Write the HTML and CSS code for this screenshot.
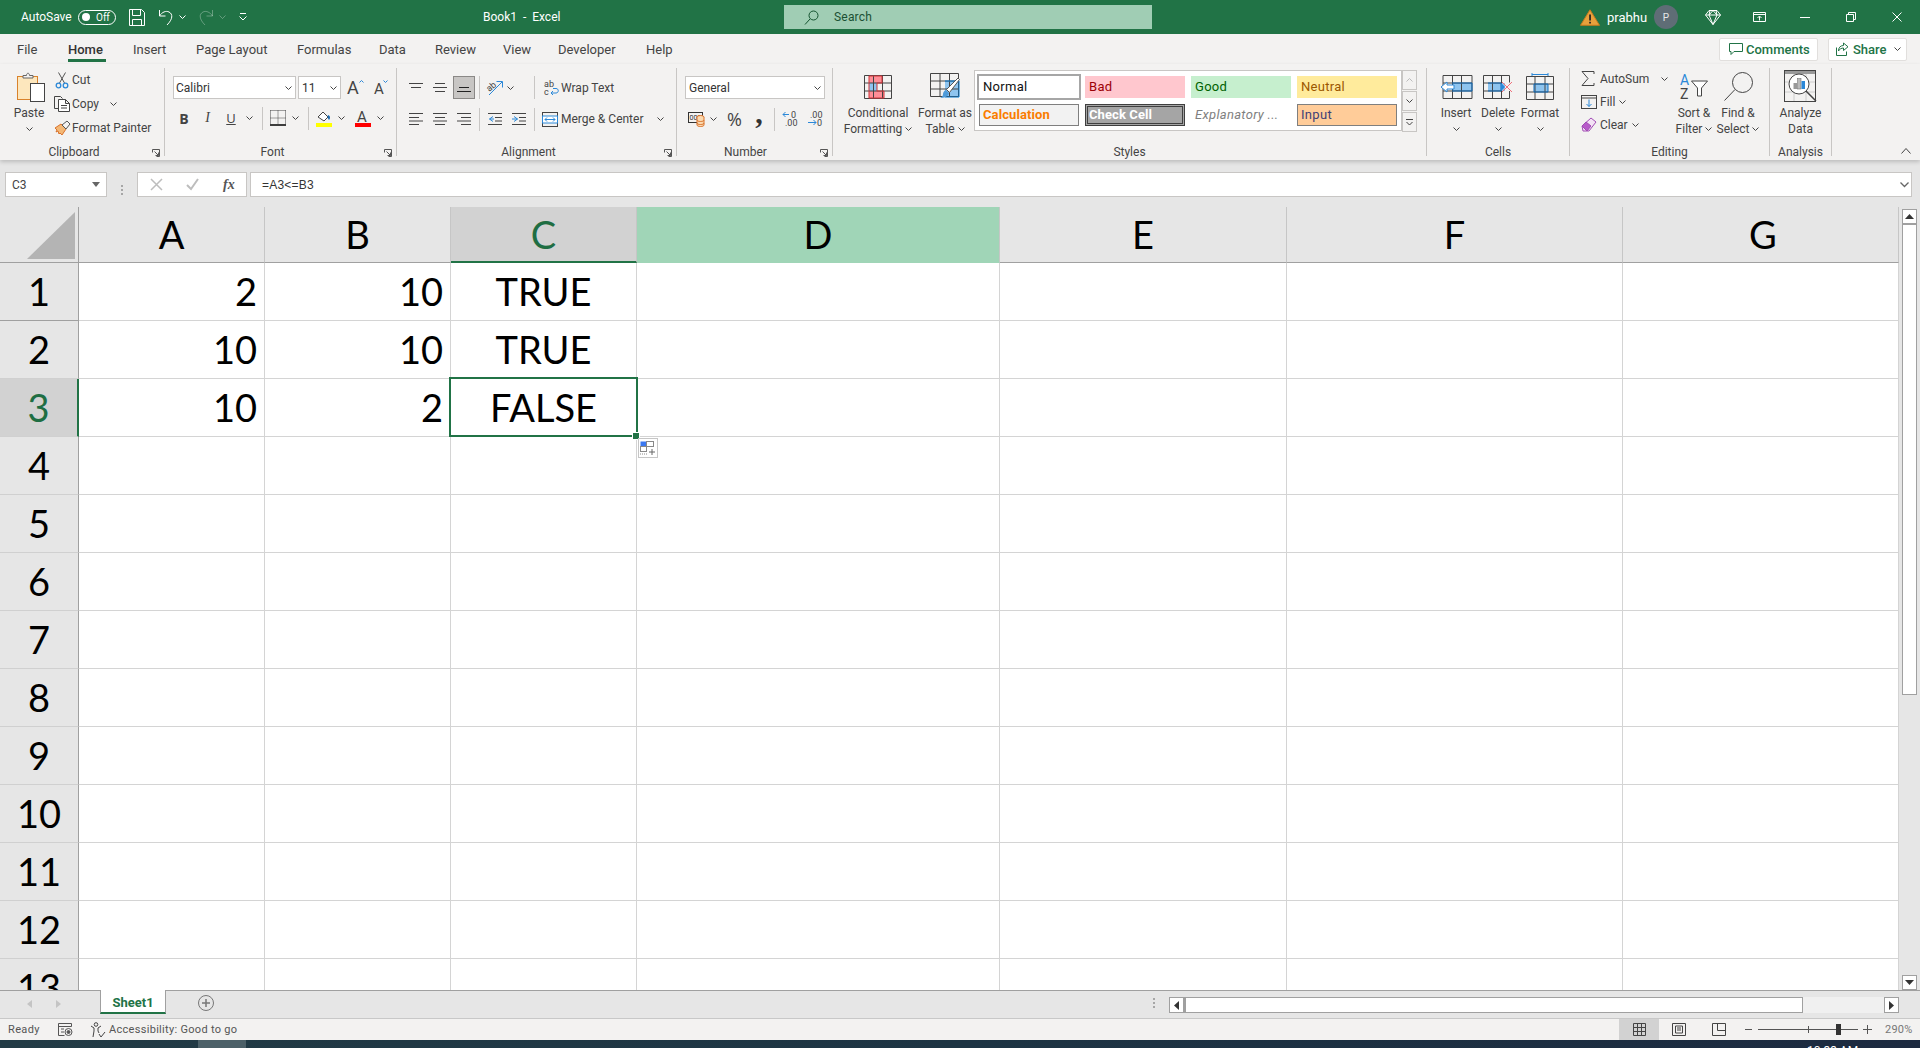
FILE: index.html
```html
<!DOCTYPE html>
<html lang="en">
<head>
<meta charset="utf-8">
<title>Book1 - Excel</title>
<link rel="stylesheet" href="styles.css">
</head>
<body>
<svg class="sprite" width="0" height="0" aria-hidden="true">
  <symbol id="chev" viewBox="0 0 7 4"><path d="M.5.5l3 3 3-3" fill="none" stroke="#444" stroke-width="1"/></symbol>
  <symbol id="launch" viewBox="0 0 8 8"><path d="M.5 3.500v-3h7v7h-3M2.500 2.500l4 4M6.500 3.500v3h-3" fill="none" stroke="#555" stroke-width="1"/></symbol>
</svg>

<header class="titlebar">
  <div class="qat">
    <span class="autosave">AutoSave</span>
    <span class="toggle ml7"><i class="knob"></i><b>Off</b></span>
    <svg class="ml13" width="16" height="17" viewBox="0 0 16 17" fill="none" stroke="#fff"><path d="M.5.500h12l3 3v13H.5zM3.500.5v6h8v-6M3.500 16.500v-6h9v6"/></svg>
    <svg class="ml13" width="16" height="17" viewBox="0 0 16 17" fill="none" stroke="#fff"><path d="M1.500 1v6h6M1.500 7C4 3 8 1.500 11 3c4 2 4 7-2 13"/></svg>
    <svg class="ml5" width="7" height="4"><path d="M.5.5l3 3 3-3" fill="none" stroke="#fff"/></svg>
    <svg class="ml12 dim" width="16" height="17" viewBox="0 0 16 17" fill="none" stroke="#fff"><path d="M14.500 1v6h-6M14.500 7C12 3 8 1.500 5 3c-4 2-4 7 2 13"/></svg>
    <svg class="ml5 dim" width="7" height="4"><path d="M.5.5l3 3 3-3" fill="none" stroke="#fff"/></svg>
    <svg class="ml12" width="10" height="8" viewBox="0 0 10 8" fill="none" stroke="#fff"><path d="M2 .5h6M1.500 3.500L5 7l3.500-3.500"/></svg>
  </div>
  <div class="doc">Book1&nbsp; -&nbsp; Excel</div>
  <div class="search">
    <svg width="15" height="15" viewBox="0 0 15 15" fill="none" stroke="#14532f" stroke-width="1"><circle cx="9.500" cy="5.500" r="4.500"/><path d="M6 9l-5 5.500"/></svg>
    <span>Search</span>
  </div>
  <div class="tb-spacer"></div>
  <div class="winctl">
    <svg width="20" height="17" viewBox="0 0 20 17"><path d="M10 .8L19.500 16.300H.5z" fill="#e8a13c" stroke="#c77a1c"/><rect x="9.200" y="5.500" width="1.700" height="6" fill="#222"/><rect x="9.200" y="12.800" width="1.700" height="1.700" fill="#222"/></svg>
    <span class="uname">prabhu</span>
    <span class="avatarcell"><span class="avatar">P</span></span>
    <svg width="16" height="15" viewBox="0 0 16 15" fill="none" stroke="#fff"><path d="M4 .5h8l3.500 4.500L8 14.500.5 5zM.5 5h15M5 .5l-1 4.500 4 9.500 4-9.500-1-4.500M4 5l4-4.500L12 5"/></svg>
    <svg width="13" height="10" viewBox="0 0 13 10" fill="none" stroke="#fff"><path d="M.5.500h12v9H.5zM.5 2.500h12M6.500 8.500v-4M4.500 6l2-2 2 2"/></svg>
    <svg width="10" height="1" viewBox="0 0 10 1"><rect width="10" height="1" fill="#fff"/></svg>
    <svg width="10" height="10" viewBox="0 0 10 10" fill="none" stroke="#fff"><path d="M.5 2.500h7v7h-7zM2.500 2.500v-2h7v7h-2"/></svg>
    <svg width="10" height="10" viewBox="0 0 10 10" fill="none" stroke="#fff"><path d="M.5.500l9 9M9.500.500l-9 9"/></svg>
  </div>
</header>

<nav class="tabs">
  <span class="tab">File</span>
  <span class="tab tab-active"><b>Home</b></span>
  <span class="tab">Insert</span>
  <span class="tab">Page Layout</span>
  <span class="tab">Formulas</span>
  <span class="tab">Data</span>
  <span class="tab">Review</span>
  <span class="tab">View</span>
  <span class="tab">Developer</span>
  <span class="tab">Help</span>
  <span class="tabs-fill"></span>
  <span class="cmdbtn comments">
    <svg width="16" height="14" viewBox="0 0 16 14" fill="none" stroke="#217346"><path d="M1.500 1.500h13v8H6l-3 3v-3H1.500z"/></svg>
    <span>Comments</span>
  </span>
  <span class="cmdbtn share">
    <svg width="14" height="14" viewBox="0 0 14 14" fill="none" stroke="#217346"><path d="M1.500 5.500v8h10v-4M8.500 1v2.500C5 3.500 3.500 6 3.500 9c1-2 3-3 5-3v2.500L13 4.800z"/></svg>
    <span>Share</span>
    <svg class="share-chev" width="7" height="4"><use href="#chev"/></svg>
  </span>
</nav>

<section class="ribbon">
  <!-- Clipboard -->
  <div class="group g-clip">
    <div class="body clip">
      <div class="big paste">
        <div class="bigicon">
          <svg width="28" height="31" viewBox="0 0 28 31"><rect x=".5" y="5.500" width="20" height="23" fill="#fde7bd" stroke="#d9822b"/><path d="M3 8.500h15" stroke="#fde7bd"/><path d="M6 7V4.500h3.500c0-3 3-3 3 0H16V7z" fill="#f3f2f1" stroke="#666"/><rect x="13.500" y="12.500" width="14" height="18" fill="#fff" stroke="#444"/></svg>
        </div>
        <span>Paste</span>
        <svg class="chev-line" width="7" height="4"><use href="#chev"/></svg>
      </div>
      <div class="cliplist">
        <div class="clipitem">
          <span class="cico"><svg width="15" height="17" viewBox="0 0 15 17" fill="none"><path d="M3.500.5L9.500 11M10.500.5L4.500 11" stroke="#555"/><circle cx="3.500" cy="13.500" r="2.300" stroke="#2b88d8" stroke-width="1.300"/><circle cx="10.500" cy="13.500" r="2.300" stroke="#2b88d8" stroke-width="1.300"/></svg></span>
          <span>Cut</span>
        </div>
        <div class="clipitem">
          <span class="cico"><svg width="16" height="16" viewBox="0 0 16 16" fill="none" stroke="#444"><path d="M4.500 12.500H.5V.5h6l2 2"/><path d="M4.500 3.500h7l4 4v8h-11zM11.500 3.500v4h4M7 9.500h6M7 12h6" fill="#fff"/></svg></span>
          <span>Copy</span>
          <svg class="copy-chev" width="7" height="4"><use href="#chev"/></svg>
        </div>
        <div class="clipitem">
          <span class="cico"><svg width="17" height="16" viewBox="0 0 17 16"><path d="M1 8l6-4 5 5-4 6-2-2-1 1-1-3-2 1 1-2z" fill="#f3b775" stroke="#d9722b"/><path d="M8 5l5-4 3 3-4 5z" fill="#f3f2f1" stroke="#555"/></svg></span>
          <span>Format Painter</span>
        </div>
      </div>
    </div>
    <div class="glabel shift">Clipboard<svg class="launch" width="8" height="8"><use href="#launch"/></svg></div>
  </div>

  <!-- Font -->
  <div class="group g-font">
    <div class="body">
      <div class="font-row1">
        <span class="combo c-font"><span>Calibri</span><svg width="7" height="4"><use href="#chev"/></svg></span>
        <span class="combo c-size"><span>11</span><svg width="7" height="4"><use href="#chev"/></svg></span>
        <svg class="ml6" width="17" height="16" viewBox="0 0 17 16"><text x="0" y="15" class="svgA" font-size="18" fill="#444">A</text><path d="M12.500 3.500L14.500 1.500l2 2" fill="none" stroke="#2b88d8"/></svg>
        <svg class="ml10" width="14" height="16" viewBox="0 0 14 16"><text x="0" y="15" class="svgA" font-size="15" fill="#444">A</text><path d="M9.500 1.500l2 2 2-2" fill="none" stroke="#2b88d8"/></svg>
      </div>
      <div class="font-row2">
        <span class="fmt fmt-b">B</span>
        <span class="fmt fmt-i">I</span>
        <span class="fmt fmt-u">U</span>
        <svg width="7" height="4"><use href="#chev"/></svg>
        <i class="vsep"></i>
        <svg width="16" height="16" viewBox="0 0 16 16" fill="none" stroke="#444"><path d="M.5.500h15M.5 8h15M8 .5v14M.5.500v14M15.500.500v14" stroke-dasharray="1 1"/><path d="M0 15h16" stroke-width="1.500" stroke="#000"/></svg>
        <svg width="7" height="4"><use href="#chev"/></svg>
        <i class="vsep"></i>
        <svg width="16" height="17" viewBox="0 0 16 17"><path d="M2 7l5-5 5 5-4 4z" fill="#fff" stroke="#444"/><path d="M12 5c3 1 2 4 1 5-1-1-2-3-1-5z" fill="#1f6cb0"/><rect y="13" width="16" height="4" fill="#ff0"/></svg>
        <svg width="7" height="4"><use href="#chev"/></svg>
        <svg class="cell-end" width="16" height="17" viewBox="0 0 16 17"><text x="2" y="12" class="svgA" font-size="15" fill="#444">A</text><rect y="13" width="16" height="4" fill="#f00"/></svg>
        <svg width="7" height="4"><use href="#chev"/></svg>
      </div>
    </div>
    <div class="glabel shift">Font<svg class="launch" width="8" height="8"><use href="#launch"/></svg></div>
  </div>

  <!-- Alignment -->
  <div class="group g-align">
    <div class="body align-grid">
      <svg width="14" height="9" viewBox="0 0 14 9" stroke="#444"><path d="M0 .5h14M2 4.500h10"/></svg>
      <svg width="14" height="9" viewBox="0 0 14 9" stroke="#444"><path d="M2 .5h10M0 4.500h14M2 8.500h10"/></svg>
      <span class="al-sel"><svg width="14" height="9" viewBox="0 0 14 9" stroke="#222"><path d="M2 4.500h10M0 8.500h14"/></svg></span>
      <i class="vsep"></i>
      <svg width="17" height="17" viewBox="0 0 17 17"><text x="0" y="11" transform="rotate(-40 4 9)" class="svgA" font-size="9" fill="#444">ab</text><path d="M2 16L15 3M9.500 2.500H15.500V8.500" fill="none" stroke="#2b88d8"/></svg>
      <svg class="left-cell" width="7" height="4"><use href="#chev"/></svg>
      <i class="vsep"></i>
      <span class="al-text">
        <span class="al-ico1"><svg width="15" height="16" viewBox="0 0 15 16"><text x="0" y="7" class="svgA" font-size="9" fill="#444">ab</text><text x="0" y="15" class="svgA" font-size="9" fill="#444">c</text><path d="M9 8.500h3c3 0 3 4.500 0 4.500H7M9 11l-2 2 2 2" fill="none" stroke="#2b88d8"/></svg></span>
        <span>Wrap Text</span>
      </span>

      <svg width="14" height="12" viewBox="0 0 14 12" stroke="#444"><path d="M0 .5h14M0 4.500h10M0 8h14M0 11.500h10"/></svg>
      <svg width="14" height="12" viewBox="0 0 14 12" stroke="#444"><path d="M0 .5h14M2 4.500h10M0 8h14M2 11.500h10"/></svg>
      <svg width="14" height="12" viewBox="0 0 14 12" stroke="#444"><path d="M0 .5h14M4 4.500h10M0 8h14M4 11.500h10"/></svg>
      <i class="vsep"></i>
      <svg width="14" height="12" viewBox="0 0 14 12" fill="none"><path d="M0 .5h14M7 4.500h7M7 8h7M0 11.500h14" stroke="#444"/><path d="M5 3.500L1.500 6 5 8.500M1.500 6H6" stroke="#2b88d8"/></svg>
      <svg width="14" height="12" viewBox="0 0 14 12" fill="none"><path d="M0 .5h14M7 4.500h7M7 8h7M0 11.500h14" stroke="#444"/><path d="M2 3.500L5.500 6 2 8.500M5.500 6H0" stroke="#2b88d8"/></svg>
      <i class="vsep"></i>
      <span class="al-text">
        <span class="al-ico2"><svg width="16" height="15" viewBox="0 0 16 15" fill="none"><rect x=".5" y=".5" width="15" height="14" stroke="#444"/><rect x=".5" y="4" width="15" height="7" fill="#fff" stroke="#2b88d8"/><path d="M3 7.500h10M5 5.500l-2 2 2 2M11 5.500l2 2-2 2" stroke="#2b88d8"/></svg></span>
        <span>Merge &amp; Center</span>
        <svg class="merge-chev" width="7" height="4"><use href="#chev"/></svg>
      </span>
    </div>
    <div class="glabel shift">Alignment<svg class="launch" width="8" height="8"><use href="#launch"/></svg></div>
  </div>

  <!-- Number -->
  <div class="group g-num">
    <div class="body">
      <div class="combo c-num"><span>General</span><svg width="7" height="4"><use href="#chev"/></svg></div>
      <div class="num-row2">
        <svg width="17" height="16" viewBox="0 0 17 16"><rect x=".5" y="1.500" width="14" height="10" fill="#f3f2f1" stroke="#333"/><text x="1.500" y="9" class="svgA" font-size="7" fill="#333">000</text><ellipse cx="12.500" cy="6" rx="3.500" ry="1.500" fill="#fbd9b0" stroke="#d9722b"/><path d="M9 6v8c0 2 7 2 7 0V6M9 9c0 2 7 2 7 0M9 12c0 2 7 2 7 0" fill="#fbd9b0" stroke="#d9722b"/></svg>
        <svg width="7" height="4"><use href="#chev"/></svg>
        <span class="pct">%</span>
        <span class="comma">,</span>
        <i class="vsep"></i>
        <svg width="16" height="16" viewBox="0 0 16 16"><text x="9" y="7" class="svgA" font-size="9" fill="#444">0</text><text x="3" y="15" class="svgA" font-size="9" fill="#444">.00</text><path d="M7 3.500H1M3.500 1L1 3.500 3.500 6" fill="none" stroke="#2b88d8"/></svg>
        <svg width="16" height="16" viewBox="0 0 16 16"><text x="3" y="7" class="svgA" font-size="9" fill="#444">.00</text><text x="10" y="15" class="svgA" font-size="9" fill="#444">0</text><path d="M1 11.500h8M6.500 9L9 11.500 6.500 14" fill="none" stroke="#2b88d8"/></svg>
      </div>
    </div>
    <div class="glabel shift-num">Number<svg class="launch" width="8" height="8"><use href="#launch"/></svg></div>
  </div>

  <!-- Styles -->
  <div class="group g-styles">
    <div class="body styles-body">
      <div class="big big-cf">
        <div class="bigicon">
          <svg width="28" height="24" viewBox="0 0 28 24"><rect x="5" y="1" width="13" height="7" fill="#ff8e97"/><rect x="5" y="8" width="8" height="8" fill="#8ec4ef"/><rect x="5" y="16" width="15" height="7" fill="#ff8e97"/><path d="M.5.500h27v23H.5zM9.500.5v23M18.500.5v23M.5 8h27M.5 16h27" fill="none" stroke="#444"/><path d="M5 1h13v7H13v8h7v7H5z" fill="none" stroke="#d13438" stroke-width="1"/></svg>
        </div>
        <span>Conditional</span>
        <span>Formatting <svg width="7" height="4"><use href="#chev"/></svg></span>
      </div>
      <div class="big big-ft">
        <div class="bigicon">
          <svg width="30" height="28" viewBox="0 0 30 28"><rect x="15" y="8" width="14" height="16" fill="#8ec4ef"/><path d="M.5.500h28v23H.5zM10 .5v23M19.500.5v23M.5 8h28M.5 16h28" fill="none" stroke="#444"/><path d="M15 8h14v16H15" fill="none" stroke="#0078d4"/><path d="M28 5l1.500 1.500-10 13-3-3z" fill="#fff" stroke="#555"/><path d="M16 17l3 3c-1 4-5 5-9 5 2-1 3-2 3-4 0-2 2-4 3-4z" fill="#4f9bd9"/></svg>
        </div>
        <span>Format as</span>
        <span>Table <svg width="7" height="4"><use href="#chev"/></svg></span>
      </div>
      <div class="gallery">
        <span class="st st-normal">Normal</span>
        <span class="st st-bad">Bad</span>
        <span class="st st-good">Good</span>
        <span class="st st-neutral">Neutral</span>
        <span class="st st-calc">Calculation</span>
        <span class="st st-check">Check Cell</span>
        <span class="st st-expl">Explanatory ...</span>
        <span class="st st-input">Input</span>
      </div>
      <div class="gal-btns">
        <span class="gal-btn"><svg width="7" height="4" viewBox="0 0 7 4"><path d="M.5 3.500l3-3 3 3" fill="none" stroke="#bbb"/></svg></span>
        <span class="gal-btn"><svg width="7" height="4"><use href="#chev"/></svg></span>
        <span class="gal-btn"><svg width="7" height="7" viewBox="0 0 7 7" fill="none" stroke="#444"><path d="M0 .5h7M.5 3l3 3 3-3"/></svg></span>
      </div>
    </div>
    <div class="glabel">Styles</div>
  </div>

  <!-- Cells -->
  <div class="group g-cells">
    <div class="body cells-body">
      <div class="big big-cell">
        <div class="bigicon">
          <svg width="33" height="24" viewBox="0 0 33 24"><rect x="12" y="8" width="20" height="8" fill="#8ec4ef"/><path d="M3 .5h29v23H3zM12.500.5v23M21.500.5v23M3 8h29M3 16h29" fill="none" stroke="#444"/><path d="M12 8h20v8H12" fill="none" stroke="#0f6cbd"/><path d="M14 10v4H7v3l-6-5 6-5v3z" fill="#fff" stroke="#2b88d8"/></svg>
        </div>
        <span>Insert</span>
        <svg class="chev-line" width="7" height="4"><use href="#chev"/></svg>
      </div>
      <div class="big big-cell">
        <div class="bigicon">
          <svg width="30" height="24" viewBox="0 0 30 24"><rect x="5" y="8" width="17" height="8" fill="#8ec4ef"/><path d="M.5.500h26v7M26.500 16v7.500H.5V16M.5.500V8M9.500.5v23M18.500.5v23M.5 8h18M.5 16h18M.5 8v8" fill="none" stroke="#444"/><path d="M5 8h13v8H5" fill="none" stroke="#0f6cbd"/><path d="M18 8l4 4-4 4" fill="#2b88d8"/><path d="M19 7l10 10M29 7L19 17" stroke="#f1707b"/></svg>
        </div>
        <span>Delete</span>
        <svg class="chev-line" width="7" height="4"><use href="#chev"/></svg>
      </div>
      <div class="big big-cell">
        <div class="bigicon">
          <svg width="28" height="27" viewBox="0 0 28 27"><path d="M6 1.500h16M6 0v3M22 0v3" stroke="#2b88d8" fill="none"/><rect x="8" y="11" width="14" height="8" fill="#8ec4ef"/><path d="M.5 3.500h27v23H.5zM9 3.500v23M19 3.500v23M.5 11h27M.5 19h27" fill="none" stroke="#444"/><path d="M8 11h14v8H8z" fill="none" stroke="#0f6cbd"/></svg>
        </div>
        <span>Format</span>
        <svg class="chev-line" width="7" height="4"><use href="#chev"/></svg>
      </div>
    </div>
    <div class="glabel">Cells</div>
  </div>

  <!-- Editing -->
  <div class="group g-edit">
    <div class="body edit-body">
      <div class="editlist">
        <div class="edititem">
          <span class="eico"><svg width="14" height="15" viewBox="0 0 14 15" fill="none" stroke="#444"><path d="M13 3V.5H1l6 7-6 7h12V12"/></svg></span>
          <span>AutoSum</span><svg class="autosum-chev" width="7" height="4"><use href="#chev"/></svg>
        </div>
        <div class="edititem">
          <span class="eico"><svg width="16" height="14" viewBox="0 0 16 14" fill="none"><rect x=".5" y=".5" width="15" height="13" stroke="#444"/><path d="M.5 3h15" stroke="#444"/><path d="M8 4.500v7M5.500 9L8 11.500 10.500 9" stroke="#2b88d8"/></svg></span>
          <span>Fill</span><svg class="ml4" width="7" height="4"><use href="#chev"/></svg>
        </div>
        <div class="edititem">
          <span class="eico"><svg width="16" height="15" viewBox="0 0 16 15"><path d="M10 1l5 4-7 9-6 0-1-5z" fill="#f3e3f5" stroke="#a24db5"/><path d="M1 9l5 5 4-5-5-4z" fill="#b75cc9" stroke="#a24db5"/></svg></span>
          <span>Clear</span><svg class="ml4" width="7" height="4"><use href="#chev"/></svg>
        </div>
      </div>
      <div class="big big-ed">
        <div class="bigicon">
          <svg width="30" height="27" viewBox="0 0 30 27"><text x="1" y="12" class="svgA" font-size="14" fill="#2b88d8">A</text><text x="1" y="26" class="svgA" font-size="14" fill="#444">Z</text><path d="M12.500 8h16l-6 7v8h-4v-8z" fill="#fff" stroke="#444"/></svg>
        </div>
        <span>Sort &amp;</span>
        <span>Filter <svg width="7" height="4"><use href="#chev"/></svg></span>
      </div>
      <div class="big big-ed">
        <div class="bigicon">
          <svg width="29" height="29" viewBox="0 0 29 29" fill="none" stroke="#444"><circle cx="18.500" cy="10.500" r="10"/><path d="M11 17.500L.5 28.500"/></svg>
        </div>
        <span>Find &amp;</span>
        <span>Select <svg width="7" height="4"><use href="#chev"/></svg></span>
      </div>
    </div>
    <div class="glabel">Editing</div>
  </div>

  <!-- Analysis -->
  <div class="group g-ana">
    <div class="body">
      <div class="big big-ana">
        <div class="bigicon">
          <svg width="33" height="33" viewBox="0 0 33 33" fill="none"><rect x=".5" y=".5" width="31" height="31" stroke="#444"/><rect x="1" y="1" width="30" height="3" fill="#999"/><path d="M1 12h30M1 22h30M10 4v27M22 4v27" stroke="#ccc"/><circle cx="15" cy="14" r="10" fill="#fff" stroke="#444"/><rect x="9.500" y="13" width="3.500" height="6" fill="#999"/><rect x="13.500" y="8.500" width="3.500" height="10.500" fill="#bbb" stroke="#666" stroke-width=".5"/><rect x="17.500" y="11" width="3.500" height="8" fill="#2b88d8"/><path d="M22 21l10 10" stroke="#444" stroke-width="1.500"/></svg>
        </div>
        <span>Analyze</span>
        <span>Data</span>
      </div>
    </div>
    <div class="glabel">Analysis</div>
  </div>
  <div class="rib-end"><svg width="10" height="6" viewBox="0 0 10 6"><path d="M.5 5.500l4.500-5 4.500 5" fill="none" stroke="#444"/></svg></div>
</section>

<div class="formula">
  <div class="namebox"><span>C3</span><svg width="8" height="5" viewBox="0 0 8 5"><path d="M0 0h8L4 5z" fill="#666"/></svg></div>
  <div class="fdots"><i></i><i></i><i></i></div>
  <div class="fxbox">
    <svg width="13" height="13" viewBox="0 0 13 13" fill="none" stroke="#bdbdbd" stroke-width="1.500"><path d="M1 1l11 11M12 1L1 12"/></svg>
    <svg width="13" height="13" viewBox="0 0 13 13" fill="none" stroke="#bdbdbd" stroke-width="2"><path d="M1 7l4 4 7-10"/></svg>
    <span class="fx">fx</span>
  </div>
  <div class="finput"><span>=A3&lt;=B3</span><svg width="9" height="5" viewBox="0 0 9 5"><path d="M.5.5l4 4 4-4" fill="none" stroke="#666" stroke-width="1.300"/></svg></div>
</div>

<main class="sheet">
  <div class="grid">
    <div class="corner"><svg width="48" height="47" viewBox="0 0 48 47"><path d="M48 0v47H0z" fill="#b4b4b4"/></svg></div>
    <div class="ch">A</div><div class="ch">B</div><div class="ch ch-sel">C</div><div class="ch ch-d">D</div><div class="ch">E</div><div class="ch">F</div><div class="ch ch-g">G</div>

    <div class="rh rh-first">1</div><div class="c num">2</div><div class="c num">10</div><div class="c ctr">TRUE</div><div class="c"></div><div class="c"></div><div class="c"></div><div class="c"></div>
    <div class="rh">2</div><div class="c num">10</div><div class="c num">10</div><div class="c ctr">TRUE</div><div class="c"></div><div class="c"></div><div class="c"></div><div class="c"></div>
    <div class="rh rh-sel">3</div><div class="c num">10</div><div class="c num">2</div>
    <div class="c ctr active">FALSE<i class="handle"></i><span class="qa"><svg width="16" height="15" viewBox="0 0 16 15" fill="none"><rect x=".5" y=".5" width="6" height="5" fill="#3b78f0"/><rect x="6.500" y=".5" width="7" height="5" stroke="#888"/><rect x=".5" y="5.500" width="6" height="5" stroke="#888"/><path d="M0 13h7" stroke="#888" stroke-dasharray="1 1"/><path d="M12 8v6M9 11h6" stroke="#666"/></svg></span></div>
    <div class="c"></div><div class="c"></div><div class="c"></div><div class="c"></div>
    <div class="rh">4</div><div class="c"></div><div class="c"></div><div class="c"></div><div class="c"></div><div class="c"></div><div class="c"></div><div class="c"></div>
    <div class="rh">5</div><div class="c"></div><div class="c"></div><div class="c"></div><div class="c"></div><div class="c"></div><div class="c"></div><div class="c"></div>
    <div class="rh">6</div><div class="c"></div><div class="c"></div><div class="c"></div><div class="c"></div><div class="c"></div><div class="c"></div><div class="c"></div>
    <div class="rh">7</div><div class="c"></div><div class="c"></div><div class="c"></div><div class="c"></div><div class="c"></div><div class="c"></div><div class="c"></div>
    <div class="rh">8</div><div class="c"></div><div class="c"></div><div class="c"></div><div class="c"></div><div class="c"></div><div class="c"></div><div class="c"></div>
    <div class="rh">9</div><div class="c"></div><div class="c"></div><div class="c"></div><div class="c"></div><div class="c"></div><div class="c"></div><div class="c"></div>
    <div class="rh">10</div><div class="c"></div><div class="c"></div><div class="c"></div><div class="c"></div><div class="c"></div><div class="c"></div><div class="c"></div>
    <div class="rh">11</div><div class="c"></div><div class="c"></div><div class="c"></div><div class="c"></div><div class="c"></div><div class="c"></div><div class="c"></div>
    <div class="rh">12</div><div class="c"></div><div class="c"></div><div class="c"></div><div class="c"></div><div class="c"></div><div class="c"></div><div class="c"></div>
    <div class="rh">13</div><div class="c"></div><div class="c"></div><div class="c"></div><div class="c"></div><div class="c"></div><div class="c"></div><div class="c"></div>
  </div>
  <div class="vscroll">
    <span class="sb-btn"><svg width="9" height="5" viewBox="0 0 9 5"><path d="M4.500 0L9 5H0z" fill="#333"/></svg></span>
    <span class="sb-thumb"></span>
    <span class="sb-fill"></span>
    <span class="sb-btn"><svg width="9" height="5" viewBox="0 0 9 5"><path d="M0 0h9L4.500 5z" fill="#333"/></svg></span>
  </div>
</main>

<div class="tabbar">
  <span class="nav-arrows">
    <svg width="5" height="8" viewBox="0 0 5 8"><path d="M5 0v8L0 4z" fill="#c4c4c4"/></svg>
    <svg width="5" height="8" viewBox="0 0 5 8"><path d="M0 0v8l5-4z" fill="#c4c4c4"/></svg>
  </span>
  <span class="sheettab">Sheet1</span>
  <span class="addsheet"><svg width="16" height="16" viewBox="0 0 16 16" fill="none" stroke="#777"><circle cx="8" cy="8" r="7.500"/><path d="M8 4v8M4 8h8" stroke-width="1.500"/></svg></span>
  <span class="hdots"><i></i><i></i><i></i></span>
  <div class="hscroll">
    <span class="hb-btn"><svg width="5" height="9" viewBox="0 0 5 9"><path d="M5 0v9L0 4.500z" fill="#333"/></svg></span>
    <span class="hb-thumb"></span>
    <span class="hb-fill"></span>
    <span class="hb-btn hb-end"><svg width="5" height="9" viewBox="0 0 5 9"><path d="M0 0v9l5-4.500z" fill="#333"/></svg></span>
  </div>
</div>

<footer class="status">
  <span class="st-ready">Ready</span>
  <svg class="st-ic1" width="15" height="15" viewBox="0 0 15 15" fill="none" stroke="#555"><path d="M.5 1.500h13v3M.5 1.500v12h6M.5 4.500h13M3 7h3M3 10h3"/><circle cx="10.500" cy="10" r="3.500"/><circle cx="10.500" cy="10" r="1.500" fill="#555"/></svg>
  <svg class="st-ic2" width="16" height="16" viewBox="0 0 16 16" fill="none" stroke="#444"><circle cx="6" cy="2.500" r="1.800"/><path d="M1 4l3 2v3l-1 6M11 4L8 6v3l1 2M9 12l2 3 4-5"/></svg>
  <span class="st-acc">Accessibility: Good to go</span>
  <span class="st-fill"></span>
  <span class="view view-on"><svg width="13" height="13" viewBox="0 0 13 13" fill="none" stroke="#444"><path d="M.5.500h12v12H.5zM4.500.5v12M8.500.5v12M.5 4.500h12M.5 8.500h12"/></svg></span>
  <span class="view"><svg width="14" height="13" viewBox="0 0 14 13" fill="none" stroke="#444"><path d="M.5.500h13v12H.5zM3.500 3h7v7h-7zM5 5h4M5 7h4"/></svg></span>
  <span class="view"><svg width="14" height="13" viewBox="0 0 14 13" fill="none" stroke="#444"><path d="M.5.500h13v12H.5zM5.500.5v7h8"/></svg></span>
  <span class="zm-minus"></span>
  <span class="zoomtrack"><i class="zm-tick"></i><i class="zm-thumb"></i></span>
  <span class="zm-plus"><svg width="9" height="9" viewBox="0 0 9 9" stroke="#555"><path d="M4.500 0v9M0 4.500h9"/></svg></span>
  <span class="zm-val">290%</span>
</footer>
<div class="taskbar"><span class="tb-app"></span><span class="clock">10:33 AM</span></div>
</body>
</html>
```
FILE: styles.css
```css
*{box-sizing:border-box}
html,body{margin:0;padding:0}
body{width:1920px;height:1048px;overflow:hidden;background:#e6e6e6;font-family:"Roboto","Open Sans",sans-serif;font-size:12px;color:#444;letter-spacing:0}
svg{display:block;flex:none;overflow:visible}
.sprite{position:absolute}
.svgA{font-family:"Roboto",sans-serif;letter-spacing:0}
.ml4{margin-left:4px}.ml5{margin-left:5px}.ml6{margin-left:6px}.ml7{margin-left:7px}.ml10{margin-left:10px}.ml12{margin-left:12px}.ml13{margin-left:13px}
.dim{opacity:.3}

/* title bar */
.titlebar{height:34px;background:#217346;color:#fff;display:grid;grid-template-columns:483px 301px 368px 1fr 340px;align-items:center}
.qat{display:flex;align-items:center;padding-left:21px}
.autosave{width:50px;font-size:12px;color:#fff}
.toggle{width:38px;height:15px;border:1px solid #fff;border-radius:8px;display:flex;align-items:center;padding-left:3px;position:relative}
.knob{width:8px;height:8px;border-radius:50%;background:#fff}
.toggle b{font-weight:400;font-size:10px;margin-left:6px}
.doc{font-size:12px}
.search{height:24px;background:#a0cdb4;color:#1b5033;display:flex;align-items:center;padding-left:20px;gap:15px;letter-spacing:.2px}
.winctl{display:grid;grid-template-columns:20px 50px 40px 46px 46px 46px 46px 46px;justify-items:center;align-items:center}
.uname{font-size:13px;color:#fff;justify-self:start;padding-left:7px}
.avatarcell{justify-self:start;padding-left:4px;display:block}
.avatar{width:24px;height:24px;border-radius:50%;background:#5f6d76;color:#e6e6e6;font-size:10px;display:flex;align-items:center;justify-content:center}

/* tabs */
.tabs{height:30px;background:#f3f2f1;display:grid;grid-template-columns:51px 65px 63px 101px 82px 56px 68px 55px 88px 40px 1fr 109px 79px;padding:0 13px 0 17px;align-items:center;font-size:13px}
.tab{color:#444;height:30px;line-height:32px;position:relative}
.tab-active b{font-weight:500;color:#333}
.tab-active::after{content:"";position:absolute;left:0;top:25px;width:38px;height:3px;background:#217346}
.cmdbtn{height:23px;background:#fff;border:1px solid #e1dfdd;border-radius:2px;display:flex;align-items:center;color:#217346;font-weight:500}
.comments{padding-left:8px;gap:2px;width:99px}
.share{padding-left:6px;gap:4px;width:79px}
.share-chev{margin-left:auto;margin-right:5px}

/* ribbon */
.ribbon{height:96px;background:#f3f2f1;display:flex;align-items:flex-start;padding-top:4px;box-shadow:0 2px 4px rgba(0,0,0,.18);position:relative;z-index:2}
.group{height:88px;border-right:1px solid #c8c6c4;flex:none;display:flex;flex-direction:column}
.body{height:76px}
.glabel{height:12px;line-height:17px;text-align:center;color:#444;position:relative}
.shift{padding-right:16px}
.shift-num{padding-right:18px}
.launch{position:absolute;right:4px;top:5px}
.g-clip{width:165px}.g-font{width:232px}.g-align{width:280px}.g-num{width:156px}.g-styles{width:594px}.g-cells{width:143px}.g-edit{width:200px}.g-ana{width:62px}
.rib-end{flex:1;height:88px;display:flex;align-items:flex-end;justify-content:flex-end;padding:0 9px 2px 0}

.big{display:flex;flex-direction:column;align-items:center;line-height:16px;flex:none}
.big>span{display:flex;align-items:center;gap:3px;white-space:nowrap}
.bigicon{height:37px;display:flex;align-items:center;justify-content:center}
.chev-line{margin-top:6px}

.clip{display:flex}
.paste{width:30px;margin-left:14px}
.paste .bigicon{padding-left:4px;width:30px}
.cliplist{margin-left:8px}
.clipitem{height:24px;display:flex;align-items:center}
.cico{width:20px;display:flex;justify-content:center}
.copy-chev{margin-left:11px}

.combo{background:#fff;border:1px solid #c8c6c4;height:23px;display:flex;align-items:center;justify-content:space-between;padding:0 3px;color:#333;font-size:12px;flex:none}
.font-row1{display:flex;align-items:flex-start;padding:8px 0 0 8px}
.c-font{width:123px;padding-left:2px}
.c-size{width:43px;margin-left:2px}
.font-row1>svg{margin-top:3px}
.font-row2{display:grid;grid-template-columns:24px 23px 24px 12px 14px 17px 18px 8px 24px 10px 25px 18px;margin:7px 0 0 7px;height:24px;align-items:center;justify-items:center}
.fmt{font-size:14px;color:#444;font-family:"Open Sans",sans-serif}
.fmt-b{font-weight:700}
.fmt-i{font-style:italic;font-family:"Liberation Serif",serif}
.fmt-u{text-decoration:underline;font-size:13px}
.cell-end{justify-self:end}
.vsep{display:block;width:1px;height:23px;background:#c8c6c4}

.align-grid{display:grid;grid-template-columns:24px 24px 24px 7px 24px 24px 7px 1fr;grid-template-rows:23px 24px;row-gap:8px;padding:8px 0 0 7px;align-items:center;justify-items:center}
.al-sel{width:22px;height:23px;background:#c8c6c4;border:1px solid #8a8886;display:flex;align-items:center;justify-content:center}
.left-cell{justify-self:start}
.al-text{justify-self:stretch;display:flex;align-items:center;color:#444}
.al-ico1{width:23px;padding-left:6px}
.al-ico2{width:23px;padding-left:4px}
.merge-chev{margin-left:14px}

.c-num{width:140px;margin:8px 0 0 8px}
.num-row2{display:grid;grid-template-columns:23px 10px 33px 16px 14px 17px 33px;margin:8px 0 0 8px;height:24px;align-items:center;justify-items:center}
.pct{font-size:18px;font-family:"Open Sans",sans-serif;color:#444}
.comma{font-size:30px;line-height:12px;font-weight:700;font-family:"Liberation Serif",serif;color:#333;margin-top:-12px}

.styles-body{display:flex;padding-left:12px}
.big-cf{width:66px}
.big-ft{width:68px;margin-right:-5px}
.gallery{width:428px;height:61px;margin-top:2px;background:#fff;border:1px solid #c8c6c4;display:grid;grid-template-columns:repeat(4,100px);grid-template-rows:22px 22px;gap:6px;padding:5px 0 0 4px;position:relative;z-index:1}
.st{display:flex;align-items:center;padding:0 0 1px 4px;font-size:13px;letter-spacing:.3px;white-space:nowrap;height:22px}
.st-normal{color:#111;outline:2px solid #a6a6a6}
.st-bad{background:#ffc7ce;color:#9c0006}
.st-good{background:#c6efce;color:#006100}
.st-neutral{background:#ffeb9c;color:#9c5700}
.st-calc{background:#f2f2f2;color:#fa7d00;font-weight:700;border:1px solid #7f7f7f;padding-left:3px;letter-spacing:.1px}
.st-check{background:#a5a5a5;color:#fff;font-weight:700;border:3px double #3f3f3f;padding-left:1px;letter-spacing:.1px}
.st-expl{color:#7f7f7f;font-style:italic}
.st-input{background:#fc9;color:#3f3f76;border:1px solid #7f7f7f;padding-left:3px}
.gal-btns{display:flex;flex-direction:column;margin:2px 0 0 0;width:15px;gap:1px}
.gal-btn{height:20px;width:15px;background:#f3f2f1;border:1px solid #c8c6c4;display:flex;align-items:center;justify-content:center}

.cells-body{display:flex;padding-left:8px}
.big-cell{width:42px}
.edit-body{display:flex;padding-left:11px}
.editlist{width:91px;margin-top:-1px}
.edititem{height:23px;display:flex;align-items:center}
.eico{width:19px}
.autosum-chev{margin-left:12px}
.big-ed{width:44px}
.big-ana{width:61px}

/* formula bar */
.formula{height:47px;padding:12px 8px 0 5px;display:flex;background:#e6e6e6}
.namebox{width:102px;height:25px;background:#fff;border:1px solid #c8c6c4;display:flex;align-items:center;justify-content:space-between;padding:0 6px 0 6px;color:#444;font-size:12px}
.fdots{width:30px;display:flex;flex-direction:column;align-items:center;justify-content:center;gap:2px}
.fdots i{width:2px;height:2px;background:#a6a6a6}
.fxbox{width:110px;height:25px;background:#fff;border:1px solid #c8c6c4;display:flex;align-items:center;padding-left:12px;gap:23px;margin-right:3px}
.fx{font-family:"Liberation Serif",serif;font-style:italic;font-weight:700;font-size:14px;color:#555;margin-left:1px}
.finput{flex:1;height:25px;background:#fff;border:1px solid #c8c6c4;display:flex;align-items:center;justify-content:space-between;padding:0 2px 0 11px;color:#333;font-size:12px;font-family:"Liberation Sans",sans-serif;letter-spacing:.2px}

/* sheet */
.sheet{height:783px;display:flex;background:#e6e6e6}
.grid{width:1899px;height:783px;overflow:hidden;display:grid;grid-template-columns:79px 186px 186px 186px 363px 287px 336px 276px;grid-template-rows:56px repeat(13,58px);background:#fff;font-family:"Lato",sans-serif;font-size:38px;color:#000}
.corner{background:#e6e6e6;border-bottom:1px solid #a0a0a0;border-right:1px solid #a0a0a0;padding:5px 0 0 27px}
.ch{background:#e6e6e6;border-right:1px solid #c6c6c6;border-bottom:1px solid #a0a0a0;display:flex;align-items:center;justify-content:center;padding-bottom:1px}
.ch-g{padding-left:5px}
.ch-sel{background:#d2d2d2;color:#1f6e43;border-bottom:2px solid #217346}
.ch-d{background:#a0d5b7;border-bottom-color:#a0d5b7}
.rh{background:#e6e6e6;border-right:1px solid #a0a0a0;border-bottom:1px solid #d0d0d0;display:flex;align-items:center;justify-content:center;padding-bottom:1px}
.rh-first{border-bottom-color:#a0a0a0}
.rh-sel{background:#d2d2d2;color:#1f6e43;border-right:2px solid #217346}
.c{border-right:1px solid #d4d4d4;border-bottom:1px solid #d4d4d4;display:flex;align-items:center;padding-bottom:1px;position:relative}
.num{justify-content:flex-end;padding-right:7px}
.ctr{justify-content:center}
.active::before{content:"";position:absolute;inset:-2px -2px -1px -2px;border:2px solid #217346;pointer-events:none}
.handle{position:absolute;right:-4px;bottom:-4px;width:6px;height:6px;background:#217346;border:1px solid #fff;box-sizing:content-box;z-index:2}
.qa{position:absolute;left:187px;top:59px;width:20px;height:20px;border:1px solid #c6c6c6;background:#fff;display:flex;align-items:center;justify-content:center;z-index:2}

.vscroll{width:15px;margin-left:3px;padding-top:2px;display:flex;flex-direction:column}
.sb-btn{height:15px;width:15px;background:#fff;border:1px solid #a0a0a0;display:flex;align-items:center;justify-content:center;flex:none}
.sb-thumb{height:471px;background:#fff;border:1px solid #a0a0a0;flex:none}
.sb-fill{flex:1}

/* tab bar */
.tabbar{height:29px;background:#e6e6e6;border-top:1px solid #a0a0a0;border-bottom:1px solid #c8c8c8;display:flex;position:relative}
.nav-arrows{width:100px;display:flex;align-items:center;padding-left:27px;gap:24px;padding-bottom:2px}
.sheettab{width:66px;height:24px;margin-top:-1px;background:#fff;border:1px solid #a0a0a0;border-top:0;border-bottom:2px solid #217346;color:#217346;font-weight:700;font-size:13px;display:flex;align-items:center;justify-content:center;padding-top:2px}
.addsheet{margin-left:32px;display:flex;align-items:center;padding-bottom:3px}
.hdots{margin-left:938px;width:3px;display:flex;flex-direction:column;align-items:center;justify-content:center;gap:2px;padding-bottom:4px}
.hdots i{width:2px;height:2px;background:#a6a6a6}
.hscroll{margin-left:14px;margin-top:6px;height:16px;width:730px;display:flex;background:#f0f0f0}
.hb-btn{width:15px;height:16px;background:#fff;border:1px solid #a0a0a0;display:flex;align-items:center;justify-content:center;flex:none}
.hb-thumb{width:619px;height:16px;background:#fff;border:1px solid #a0a0a0;border-left-width:2px;flex:none}
.hb-fill{flex:1}

/* status */
.status{height:21px;background:#f3f2f1;display:flex;align-items:center;font-size:11px;color:#555}
.st-ready{margin-left:8px;width:50px;letter-spacing:.35px}
.st-ic2{margin-left:17px}
.st-acc{margin-left:3px;letter-spacing:.3px}
.st-fill{flex:1}
.view{width:40px;height:21px;display:flex;align-items:center;justify-content:center}
.view-on{background:#d2d2d2}
.zm-minus{width:7px;height:1px;background:#555;margin-left:6px}
.zoomtrack{width:100px;height:1px;background:#555;margin-left:6px;position:relative;display:block}
.zm-tick{position:absolute;left:50px;top:-3px;width:1px;height:7px;background:#555}
.zm-thumb{position:absolute;left:78px;top:-5px;width:5px;height:11px;background:#333}
.zm-plus{margin-left:5px}
.zm-val{margin-left:13px;width:35px;color:#777;letter-spacing:.2px}

.taskbar{height:8px;background:linear-gradient(90deg,#223b45,#1d3443 50%,#1c2a40);position:relative;display:flex;overflow:hidden}
.tb-app{margin-left:198px;width:48px;height:8px;background:#4c6068}
.clock{position:absolute;left:1807px;top:4px;color:#fff;font-size:12px;line-height:14px}
```
